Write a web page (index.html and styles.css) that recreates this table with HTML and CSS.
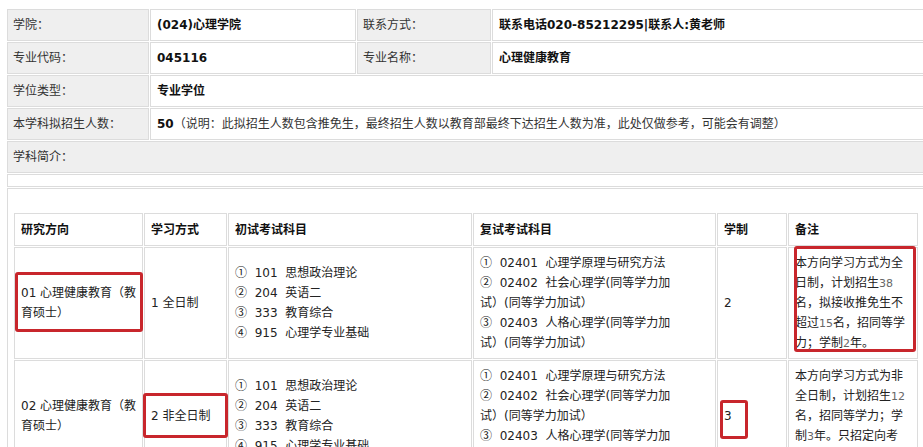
FILE: index.html
```html
<!DOCTYPE html>
<html lang="zh-CN">
<head>
<meta charset="utf-8">
<title>专业目录</title>
<link rel="stylesheet" href="styles.css">
</head>
<body>
<table class="info">
  <colgroup>
    <col class="c-l1"><col class="c-v1"><col class="c-l2"><col class="c-v2">
  </colgroup>
  <tr>
    <td class="label">学院：</td>
    <td class="value">(024)心理学院</td>
    <td class="label">联系方式：</td>
    <td class="value">联系电话020-85212295|联系人:黄老师</td>
  </tr>
  <tr>
    <td class="label">专业代码：</td>
    <td class="value">045116</td>
    <td class="label">专业名称：</td>
    <td class="value">心理健康教育</td>
  </tr>
  <tr>
    <td class="label">学位类型：</td>
    <td class="value" colspan="3">专业学位</td>
  </tr>
  <tr>
    <td class="label">本学科拟招生人数：</td>
    <td class="value" colspan="3"><b>50</b><span class="note">（说明：此拟招生人数包含推免生，最终招生人数以教育部最终下达招生人数为准，此处仅做参考，可能会有调整）</span></td>
  </tr>
  <tr>
    <td class="label" colspan="4">学科简介：</td>
  </tr>
  <tr class="blank">
    <td colspan="4"></td>
  </tr>
  <tr>
    <td class="holder" colspan="4">
      <div class="plan-wrap">
        <table class="plan">
          <colgroup>
            <col class="p1"><col class="p2"><col class="p3"><col class="p4"><col class="p5"><col class="p6">
          </colgroup>
          <tr class="head">
            <th>研究方向</th>
            <th>学习方式</th>
            <th>初试考试科目</th>
            <th>复试考试科目</th>
            <th>学制</th>
            <th>备注</th>
          </tr>
          <tr>
            <td class="nw">01 心理健康教育（教<br>育硕士）</td>
            <td>1 全日制</td>
            <td class="nw"><span class="ci">①</span>&nbsp; 101 &nbsp;思想政治理论<br><span class="ci">②</span>&nbsp; 204 &nbsp;英语二<br><span class="ci">③</span>&nbsp; 333 &nbsp;教育综合<br><span class="ci">④</span>&nbsp; 915 &nbsp;心理学专业基础</td>
            <td class="nw"><span class="ci">①</span>&nbsp; 02401 &nbsp;心理学原理与研究方法<br><span class="ci">②</span>&nbsp; 02402 &nbsp;社会心理学(同等学力加<br>试）(同等学力加试）<br><span class="ci">③</span>&nbsp; 02403 &nbsp;人格心理学(同等学力加<br>试）(同等学力加试）</td>
            <td>2</td>
            <td class="nw">本方向学习方式为全<br>日制，计划招生<span class="sn">38</span><br>名，拟接收推免生不<br>超过<span class="sn">15</span>名，招同等学<br>力；学制<span class="sn">2</span>年。</td>
          </tr>
          <tr>
            <td class="nw">02 心理健康教育（教<br>育硕士）</td>
            <td>2 非全日制</td>
            <td class="nw"><span class="ci">①</span>&nbsp; 101 &nbsp;思想政治理论<br><span class="ci">②</span>&nbsp; 204 &nbsp;英语二<br><span class="ci">③</span>&nbsp; 333 &nbsp;教育综合<br><span class="ci">④</span>&nbsp; 915 &nbsp;心理学专业基础</td>
            <td class="nw"><span class="ci">①</span>&nbsp; 02401 &nbsp;心理学原理与研究方法<br><span class="ci">②</span>&nbsp; 02402 &nbsp;社会心理学(同等学力加<br>试）(同等学力加试）<br><span class="ci">③</span>&nbsp; 02403 &nbsp;人格心理学(同等学力加<br>试）(同等学力加试）</td>
            <td>3</td>
            <td class="nw">本方向学习方式为非<br>全日制，计划招生<span class="sn">12</span><br>名，招同等学力；学<br>制<span class="sn">3</span>年。只招定向考<br>生。</td>
          </tr>
        </table>
        <div class="mark m1"></div>
        <div class="mark m2"></div>
        <div class="mark m3"></div>
        <div class="mark m4"></div>
      </div>
    </td>
  </tr>
</table>
</body>
</html>
```

FILE: styles.css
```css
html, body {
  overflow: hidden;
}
body {
  margin: 8px 0 0 6px;
  background: #fff;
  color: #222;
  font-family: "DejaVu Sans", "Noto Sans CJK SC", sans-serif;
  font-size: 12px;
  line-height: 20px;
}

.info {
  border-collapse: separate;
  border-spacing: 1px;
  table-layout: fixed;
  width: 945px;
}
.c-l1 { width: 142px; }
.c-v1 { width: 206px; }
.c-l2 { width: 134px; }
.c-v2 { width: 459px; }

.info > tbody > tr > td {
  box-sizing: border-box;
  border: 1px solid #dcdcdc;
  height: 32px;
  padding: 0 5px;
  vertical-align: middle;
  white-space: nowrap;
}
.info td.label {
  background: #efefef;
  color: #333;
}
.info td.value {
  padding-left: 6px;
  font-weight: bold;
  color: #111;
}
.info td.value .note {
  font-weight: normal;
  color: #333;
}
.info tr.blank > td {
  height: 13px;
}
.info td.holder {
  padding: 23px 5px 0 5px;
  vertical-align: top;
  height: 300px;
}

.plan-wrap {
  position: relative;
  width: 906px;
}
.plan {
  border-collapse: separate;
  border-spacing: 1px;
  table-layout: fixed;
  width: 906px;
}
.p1 { width: 129px; }
.p2 { width: 83px; }
.p3 { width: 244px; }
.p4 { width: 243px; }
.p5 { width: 70px; }
.p6 { width: 130px; }

.plan th,
.plan td {
  box-sizing: border-box;
  border: 1px solid #dcdcdc;
  padding: 5px 6px;
  vertical-align: middle;
  text-align: left;
  color: #222;
}
.plan tr.head th {
  height: 33px;
  padding-top: 0;
  padding-bottom: 0;
  font-weight: bold;
  color: #111;
}
.plan td.nw {
  white-space: nowrap;
}
.ci {
  font-family: "Noto Sans CJK SC", sans-serif;
  line-height: 0;
}
.sn {
  font-size: 11px;
  line-height: 0;
  color: #666;
}

.mark {
  position: absolute;
  box-sizing: border-box;
  border: 3px solid #c8262c;
  border-radius: 3px;
}
.m1 { left: 2px; top: 60px; width: 128px; height: 60px; }
.m2 { left: 130px; top: 181px; width: 85px; height: 45px; }
.m3 { left: 707px; top: 188px; width: 28px; height: 39px; }
.m4 { left: 781px; top: 34px; width: 122px; height: 106px; }
```
